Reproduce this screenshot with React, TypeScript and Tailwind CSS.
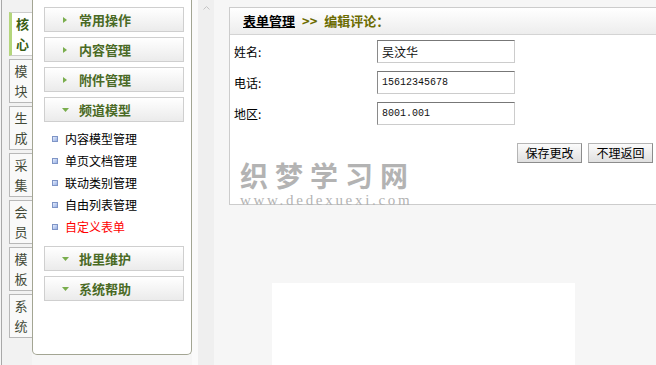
import React from "react";

const tabs = ["核心", "模块", "生成", "采集", "会员", "模板", "系统"];
const channelItems = ["内容模型管理", "单页文档管理", "联动类别管理", "自由列表管理"];

const ArrowRight = () => (
  <svg width="4" height="6" viewBox="0 0 4 6" className="block">
    <path d="M0 0 L4 3 L0 6 Z" fill="#79ad4c" />
  </svg>
);

const ArrowDown = () => (
  <svg width="7" height="4" viewBox="0 0 7 4" className="block -ml-[1px]">
    <path d="M0 0 L7 0 L3.5 4 Z" fill="#79ad4c" />
  </svg>
);

const MenuHeader = ({ title, open }: { title: string; open?: boolean }) => (
  <div className="w-[140px] h-[25px] border border-[#cfcfcf] bg-linear-to-b from-white to-[#ebebeb] flex items-center pl-[18px]">
    <div className="w-[16px] flex items-center">{open ? <ArrowDown /> : <ArrowRight />}</div>
    <span className="text-[13px] font-bold text-[#4a6a25] leading-none">{title}</span>
  </div>
);

const Bullet = () => (
  <span className="w-[6px] h-[6px] border border-[#7f95c6] bg-linear-to-br from-[#e6edfc] to-[#98b0e4] shrink-0" />
);

const FormRow = ({ label, value, mono }: { label: string; value: string; mono?: boolean }) => (
  <div className="h-[31px] flex items-center pl-[4px]">
    <span className="w-[143px] text-[12px] text-black">{label}</span>
    <input
      readOnly
      value={value}
      className={`w-[138px] h-[23px] px-[4px] border border-t-[#777777] border-l-[#8a8a8a] border-r-[#cccccc] border-b-[#cccccc] bg-white outline-none text-[#111] ${
        mono ? "font-['Liberation_Mono',monospace] text-[10px]" : "text-[12px]"
      }`}
    />
  </div>
);

const Button = ({ children }: { children: React.ReactNode }) => (
  <button className="w-[65px] h-[20px] text-[12px] text-black leading-none border border-[#b5b5b5] border-r-[#8c8c8c] border-b-[#8c8c8c] bg-linear-to-b from-[#fbfbfb] to-[#e0e0e0]">
    {children}
  </button>
);

export default function App() {
  return (
    <div className="w-[656px] h-[365px] overflow-hidden flex bg-[#f6f6f6] font-['Noto_Sans_CJK_SC',sans-serif] text-[12px] text-black">
      {/* side tabs */}
      <div className="w-[31px] h-full shrink-0 ml-[1px] border-l border-[#a9a9a9] bg-[#f2f2f2] pl-[7px] pt-[12px] flex flex-col gap-[3px]">
        {tabs.map((t, i) => (
          <div
            key={t}
            className={`w-[23px] h-[44px] flex flex-col items-center justify-center text-[13px] leading-[20px] ${
              i === 0
                ? "bg-white border-l-[3px] border-y border-l-[#b4d67c] border-y-[#cccccc] text-[#3a5f14] font-bold pl-[1px]"
                : "bg-[#f9f9f9] border border-r-0 border-[#b8b8b8] text-[#434a38]"
            }`}
          >
            <span>{t[0]}</span>
            <span>{t[1]}</span>
          </div>
        ))}
      </div>

      {/* menu panel */}
      <div className="w-[160px] h-[355px] shrink-0 bg-white border border-t-0 border-[#a3a593] rounded-b-[5px] pl-[11px] pt-[7px]">
        <div className="flex flex-col gap-[5px]">
          <MenuHeader title="常用操作" />
          <MenuHeader title="内容管理" />
          <MenuHeader title="附件管理" />
          <MenuHeader title="频道模型" open />
        </div>
        <div className="mt-[6px] flex flex-col">
          {channelItems.map((item) => (
            <div key={item} className="h-[22px] flex items-center pl-[8px] gap-[7px]">
              <Bullet />
              <span className="text-[12px] text-black">{item}</span>
            </div>
          ))}
          <div className="h-[22px] flex items-center pl-[8px] gap-[7px]">
            <Bullet />
            <span className="text-[12px] text-[#ff0000]">自定义表单</span>
          </div>
        </div>
        <div className="mt-[8px] flex flex-col gap-[5px]">
          <MenuHeader title="批里维护" open />
          <MenuHeader title="系统帮助" open />
        </div>
      </div>

      <div className="w-[6px] h-full shrink-0 bg-[#fafafa]" />
      <div className="w-[16px] h-full shrink-0 bg-[#efefef] flex justify-center pt-[6px]">
        <svg width="7" height="4" viewBox="0 0 7 4" className="block">
          <path d="M0.5 3.5 L3.5 0.5 L6.5 3.5" fill="none" stroke="#c4c4c4" strokeWidth="1" />
        </svg>
      </div>

      {/* main */}
      <div className="flex-1 pl-[15px] pt-[7px]">
        <div className="relative w-[432px] h-[198px] bg-white border border-[#cccccc]">
          <div className="h-[27px] border-b border-[#d4d4d4] bg-linear-to-b from-white to-[#ededed] flex items-center pl-[13px] text-[13px] font-bold">
            <span className="underline text-black">表单管理</span>
            <span className="ml-[7px] text-[#6b6b00]">&gt;&gt;</span>
            <span className="ml-[7px] text-[#6b6b00]">编辑评论：</span>
          </div>
          <div className="pt-[1px]">
            <FormRow label="姓名:" value="吴汶华" />
            <FormRow label="电话:" value="15612345678" mono />
            <FormRow label="地区:" value="8001.001" mono />
          </div>
          <div className="mt-[14px] flex justify-end gap-[6px] pr-[7px]">
            <Button>保存更改</Button>
            <Button>不理返回</Button>
          </div>

          {/* watermark */}
          <div className="absolute left-[10px] top-[152px] text-[#b3b3b3] pointer-events-none">
            <div className="text-[28px] leading-[30px] font-bold tracking-[7px]">织梦学习网</div>
            <div className="mt-[3px] font-['Liberation_Serif',serif] text-[15px] leading-[15px] tracking-[2.7px]">
              www.dedexuexi.com
            </div>
          </div>
        </div>
        <div className="mt-[78px] ml-[43px] w-[303px] h-[90px] bg-white" />
      </div>
    </div>
  );
}
